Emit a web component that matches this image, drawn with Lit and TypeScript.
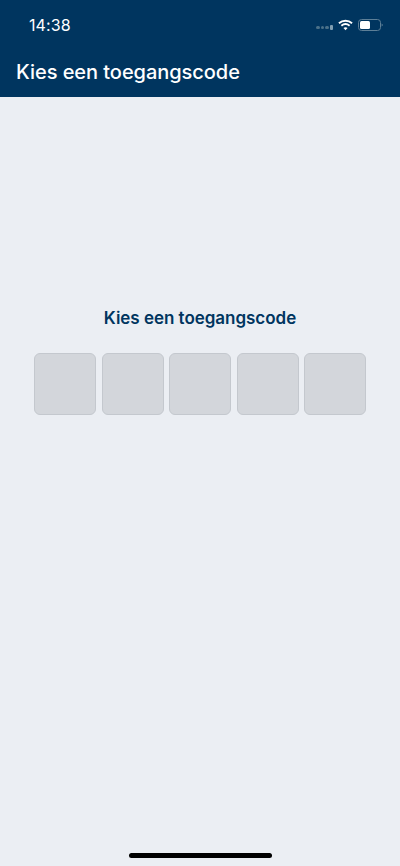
import { LitElement, css, html } from 'lit';
import { customElement } from 'lit/decorators.js';

@customElement('app-root')
export class AppRoot extends LitElement {
  static styles = css`
    :host {
      display: flex;
      flex-direction: column;
      height: 866px;
      background: #ebeef3;
      font-family: Inter, "Liberation Sans", sans-serif;
    }

    .header {
      background: #00355f;
      color: #fff;
      height: 97px;
      box-sizing: border-box;
      flex: none;
    }

    .status {
      height: 49px;
      display: flex;
      align-items: center;
      justify-content: space-between;
      padding: 0 17px 0 29px;
    }

    .time {
      font-size: 16px;
      font-weight: 400;
      letter-spacing: 0.1px;
    }

    .status-icons {
      display: flex;
      align-items: center;
      gap: 5px;
    }

    .signal {
      display: flex;
      align-items: center;
      gap: 1px;
      margin-top: 6px;
    }

    .signal span {
      width: 3.5px;
      height: 3.5px;
      border-radius: 50%;
      background: #4a7189;
    }

    .signal span:last-child {
      background: #7f9db0;
      border-radius: 1px;
      height: 4.5px;
    }

    .battery {
      display: block;
    }

    .title {
      margin: 1px 0 0;
      padding: 0 16px;
      font-size: 20px;
      font-weight: 500;
      line-height: 44px;
      letter-spacing: -0.05px;
    }

    .body {
      flex: 1;
      display: flex;
      flex-direction: column;
      align-items: center;
      padding-top: 209px;
    }

    .prompt {
      margin: 0;
      color: #00355f;
      font-size: 17px;
      font-weight: 600;
      line-height: 24px;
      letter-spacing: -0.03px;
    }

    .boxes {
      display: flex;
      gap: 5.5px;
      margin-top: 23px;
    }

    .box {
      width: 62px;
      height: 62px;
      box-sizing: border-box;
      background: #d3d6db;
      border: 1.5px solid #c4c8ce;
      border-radius: 6px;
    }

    .home-bar {
      flex: none;
      align-self: center;
      width: 143px;
      height: 5px;
      margin-bottom: 8px;
      background: #000;
      border-radius: 3px;
    }
  `;

  render() {
    return html`
      <div class="header">
        <div class="status">
          <span class="time">14:38</span>
          <div class="status-icons">
            <div class="signal"><span></span><span></span><span></span><span></span></div>
            <svg width="15" height="12" viewBox="0 0 16 12" fill="none" stroke="#fff" stroke-width="2">
              <path d="M1 4.2C5 .6 11 .6 15 4.2" />
              <path d="M3.6 6.8C6.2 4.6 9.8 4.6 12.4 6.8" />
              <path d="M8 11.5 5.8 9.2C7 8.2 9 8.2 10.2 9.2Z" fill="#fff" stroke="none" />
            </svg>
            <svg class="battery" width="25" height="12" viewBox="0 0 25 12" fill="none">
              <rect x="0.5" y="0.5" width="22" height="11" rx="3" stroke="#5d7f97" />
              <rect x="2" y="2" width="10" height="8" rx="1.5" fill="#fff" />
              <path d="M23.6 4.5C24.4 4.8 24.8 5.4 24.8 6S24.4 7.2 23.6 7.5Z" fill="#5d7f97" />
            </svg>
          </div>
        </div>
        <h1 class="title">Kies een toegangscode</h1>
      </div>
      <div class="body">
        <h2 class="prompt">Kies een toegangscode</h2>
        <div class="boxes">
          ${[0, 1, 2, 3, 4].map(() => html`<div class="box"></div>`)}
        </div>
      </div>
      <div class="home-bar"></div>
    `;
  }
}
